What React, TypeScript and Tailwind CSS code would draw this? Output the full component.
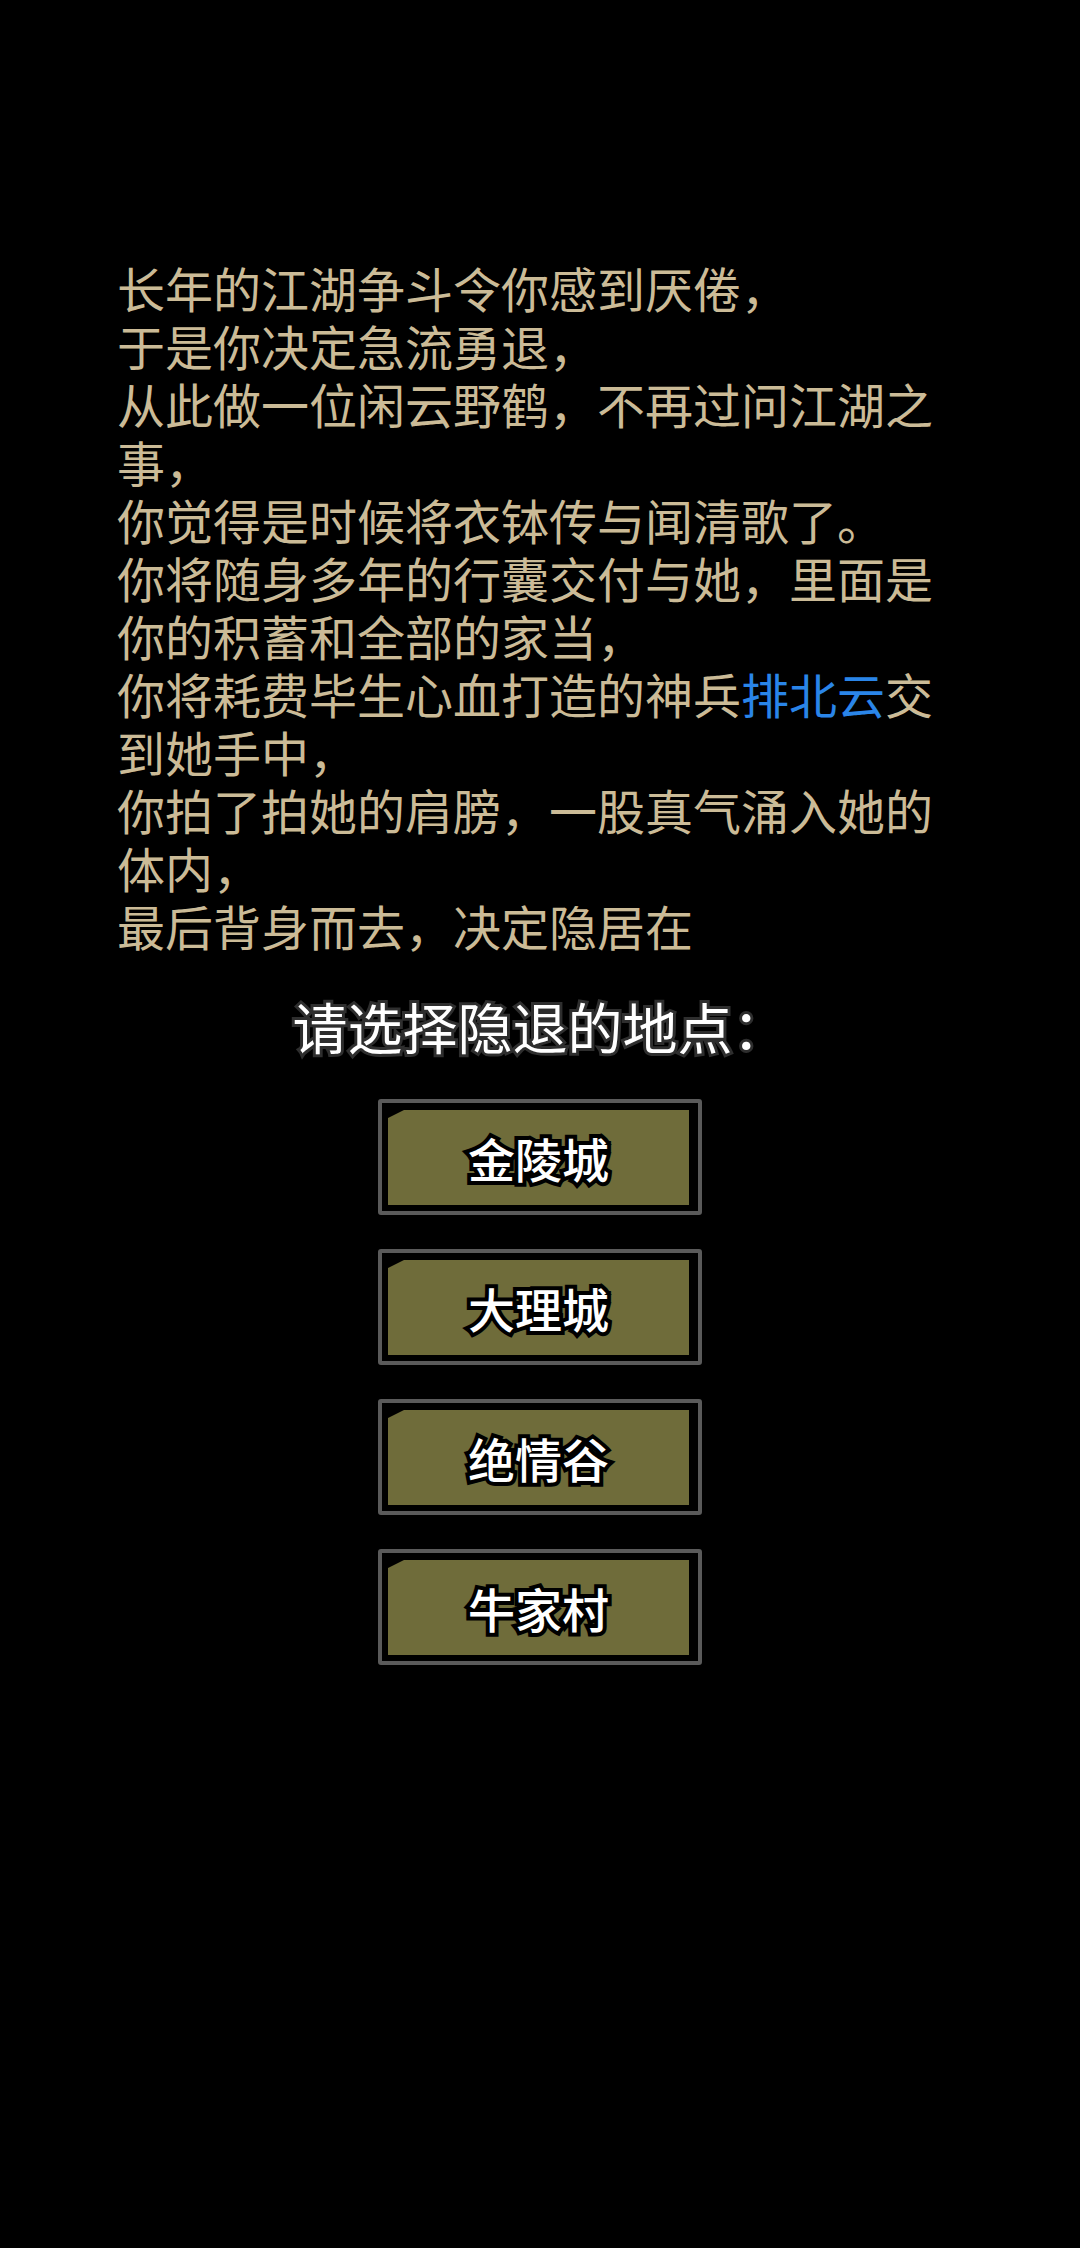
const places = ["金陵城", "大理城", "绝情谷", "牛家村"];

const cjk = "font-['Noto_Sans_CJK_SC','Noto_Sans',sans-serif]";

function PlaceButton({ label }: { label: string }) {
  return (
    <button className="w-[324px] h-[116px] rounded-[3px] border-[4px] border-[#5a5a5a] bg-black pl-[6px] pt-[7px] pr-[9px] pb-[6px]">
      <div className="w-full h-full bg-[#6f6c3a] [clip-path:polygon(16px_0,100%_0,100%_100%,0_100%,0_8px)] flex items-center justify-center">
        <span className="text-[47px] leading-none font-medium text-white [-webkit-text-stroke:8px_black] [paint-order:stroke_fill]">
          {label}
        </span>
      </div>
    </button>
  );
}

export default function App() {
  return (
    <div className={`w-[1080px] h-[2248px] bg-black ${cjk}`}>
      <div className="pt-[258px] pl-[117px]">
        <div className="w-[830px] text-[48px] leading-[58px] text-[#cbbb97]">
          <p>长年的江湖争斗令你感到厌倦，</p>
          <p>于是你决定急流勇退，</p>
          <p>从此做一位闲云野鹤，不再过问江湖之事，</p>
          <p>你觉得是时候将衣钵传与闻清歌了。</p>
          <p>你将随身多年的行囊交付与她，里面是你的积蓄和全部的家当，</p>
          <p>
            你将耗费毕生心血打造的神兵<span className="text-[#2a85e8]">排北云</span>交到她手中，
          </p>
          <p>你拍了拍她的肩膀，一股真气涌入她的体内，</p>
          <p>最后背身而去，决定隐居在</p>
        </div>
      </div>

      <h2 className="mt-[39px] text-center text-[55px] leading-[64px] text-white [-webkit-text-stroke:6px_#2e2e2e] [paint-order:stroke_fill]">
        请选择隐退的地点：
      </h2>

      <div className="mt-[42px] flex flex-col items-center gap-[34px]">
        {places.map(p => (
          <PlaceButton key={p} label={p} />
        ))}
      </div>
    </div>
  );
}
